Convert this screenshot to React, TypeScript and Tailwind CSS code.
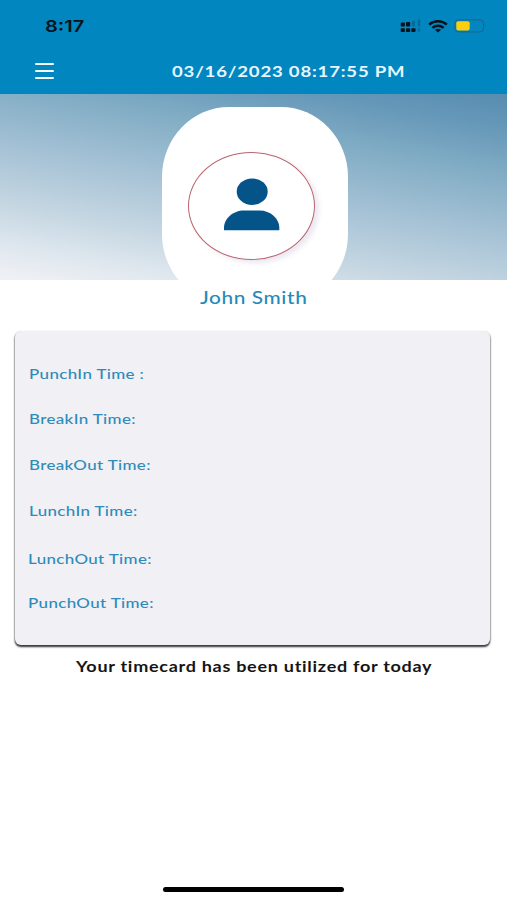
const rows = [
  { label: "PunchIn Time :", style: "h-[45px] pl-[14px]" },
  { label: "BreakIn Time:", style: "h-[45px] pl-[14px]" },
  { label: "BreakOut Time:", style: "h-[47px] pl-[14px]" },
  { label: "LunchIn Time:", style: "h-[45px] pl-[14px]" },
  { label: "LunchOut Time:", style: "h-[51px] pl-[13px]" },
  { label: "PunchOut Time:", style: "h-[38px] pl-[13px]" },
];

function Signal() {
  return (
    <svg width="22" height="14" viewBox="0 0 22 14">
      <g fill="#06131c">
        <rect x="0.7" y="3.6" width="4.2" height="4" rx="0.8" />
        <rect x="6" y="3" width="4.2" height="4.6" rx="0.8" />
        <rect x="0.7" y="9.2" width="4.2" height="3.8" rx="0.8" />
        <rect x="6" y="9.2" width="4.2" height="3.8" rx="0.8" />
        <rect x="11.3" y="9.2" width="4.2" height="3.8" rx="0.8" />
      </g>
      <g fill="#066a9d">
        <rect x="12" y="1.6" width="3" height="6" rx="0.8" />
        <rect x="17.7" y="0.6" width="2.6" height="7" rx="0.8" />
        <rect x="17.7" y="9.2" width="2.6" height="3.6" rx="0.8" />
      </g>
    </svg>
  );
}

function Wifi() {
  return (
    <svg width="20" height="13" viewBox="0 0 20 13" fill="none" stroke="#06131c" strokeWidth="2.4">
      <path d="M1.2 4.6C6 0.2 14 0.2 18.8 4.6" />
      <path d="M4.4 7.8C7.6 5 12.4 5 15.6 7.8" />
      <path d="M7 9.8C8.7 8.4 11.3 8.4 13 9.8L10 12.5Z" fill="#06131c" stroke="none" />
    </svg>
  );
}

function Battery() {
  return (
    <svg width="34" height="14" viewBox="0 0 34 14">
      <rect x="0.9" y="0.9" width="28.6" height="12" rx="3.6" fill="none" stroke="#1d6488" strokeWidth="1" />
      <rect x="2.3" y="2.2" width="13.4" height="9.4" rx="2" fill="#fbcf0b" />
      <path d="M30.8 5Q32.6 6.9 30.8 8.8Z" fill="#1d6488" />
    </svg>
  );
}

export default function App() {
  return (
    <div className="flex h-[900px] w-[507px] flex-col overflow-hidden bg-white font-[Lato,sans-serif]">
      <header className="h-[94px] shrink-0 bg-[#0286c0]">
        <div className="flex h-[52px] items-center pr-[19px] pl-[45px]">
          <span className="origin-left scale-x-[1.25] font-[Inter,sans-serif] text-[16px] leading-none font-semibold text-[#06131c]">8:17</span>
          <div className="ml-auto flex items-center">
            <Signal />
            <div className="ml-[6px]"><Wifi /></div>
            <div className="ml-[6px]"><Battery /></div>
          </div>
        </div>
        <div className="flex h-[38px] items-center pl-[35px]">
          <div className="flex w-[19px] flex-col gap-[5px]">
            <span className="h-[2px] rounded bg-[#f0faff]" />
            <span className="h-[2px] rounded bg-[#f0faff]" />
            <span className="h-[2px] rounded bg-[#f0faff]" />
          </div>
          <span className="ml-[118px] origin-left scale-x-[1.16] text-[16px] leading-none font-bold tracking-[0.7px] whitespace-nowrap text-[#e6f7ff]">03/16/2023 08:17:55 PM</span>
        </div>
      </header>

      <section className="h-[186px] shrink-0 overflow-hidden bg-[linear-gradient(10deg,#f1f1f5_0%,#e0e8ef_12%,#c3d5e1_29%,#a3c0d4_50%,#82adc5_70%,#6597b8_88%,#578db1_100%)] pt-[13px] pl-[162px]">
        <div className="h-[197px] w-[186px] rounded-[67px/70px] bg-white pt-[45px] pl-[26px]">
          <div className="flex h-[108px] w-[127px] justify-center rounded-[50%] border border-[#b9646d] shadow-[4px_3px_5px_rgba(100,60,140,0.12)]">
            <svg className="mt-[25px]" width="56" height="54" viewBox="0 0 56 54" fill="#045389">
              <ellipse cx="28.2" cy="13.7" rx="15.5" ry="13.2" />
              <path d="M0 52.3V49.5C0 40.5 9 32.4 20 32.4H35.5C46.5 32.4 55.3 40.5 55.3 49.5V52.3Z" />
            </svg>
          </div>
        </div>
      </section>

      <div className="flex h-[51px] shrink-0 pt-[9px] pl-[200px]">
        <span className="origin-left scale-x-[1.19] text-[17.5px] leading-[18px] font-medium tracking-[0.5px] whitespace-nowrap text-[#248abb]">John Smith</span>
      </div>

      <main className="mr-[17px] ml-[15px] h-[314px] shrink-0 rounded-[6px] bg-[#f1f0f5] pt-[20px] shadow-[0_2px_2px_#3c3c42,0_1px_2px_#77777d]">
        {rows.map((row) => (
          <div key={row.label} className={`flex items-center ${row.style}`}>
            <span className="origin-left scale-x-[1.21] text-[14px] leading-none font-medium tracking-[0.3px] whitespace-nowrap text-[#2c8bba]">{row.label}</span>
          </div>
        ))}
      </main>

      <p className="flex h-[42px] shrink-0 items-center pl-[76px]">
        <span className="origin-left scale-x-[1.2] text-[15px] leading-none font-bold tracking-[0.6px] whitespace-nowrap text-[#151515]">Your timecard has been utilized for today</span>
      </p>

      <div className="mx-auto mt-auto mb-[8px] h-[5px] w-[181px] rounded-full bg-black" />
    </div>
  );
}
